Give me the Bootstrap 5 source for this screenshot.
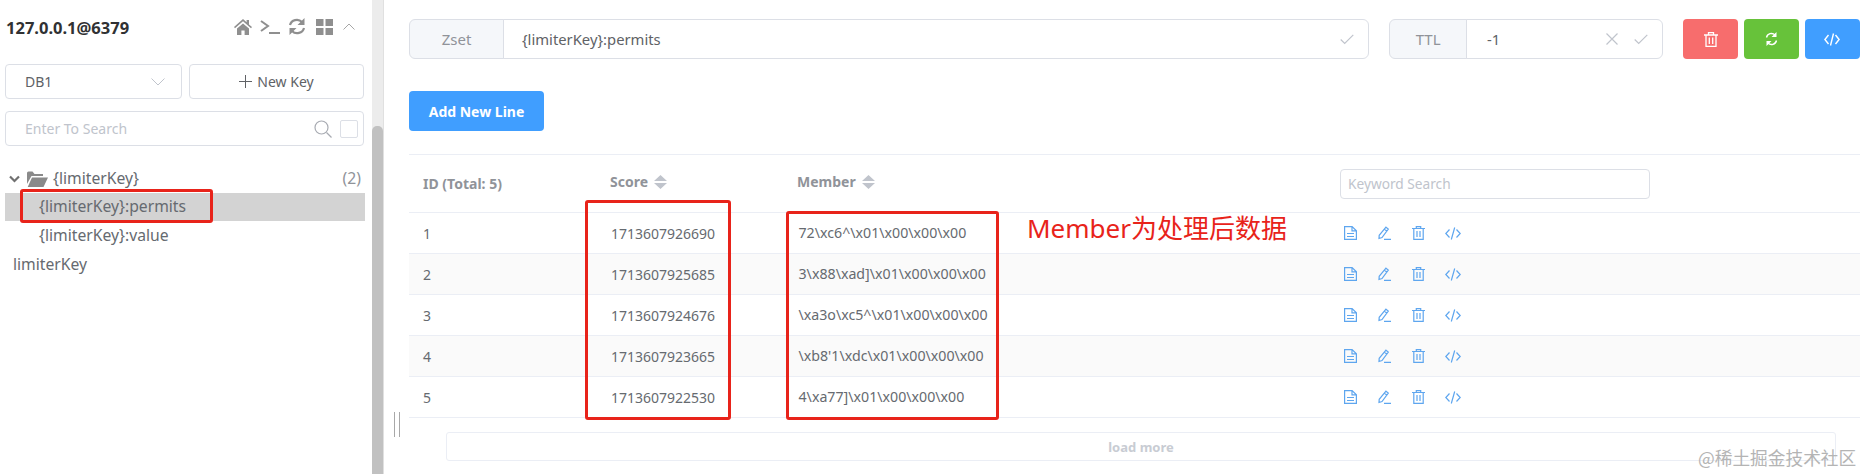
<!doctype html>
<html lang="en"><head><meta charset="utf-8"><title>Redis key</title>
<link href="https://cdn.jsdelivr.net/npm/bootstrap@5.3.0/dist/css/bootstrap.min.css" rel="stylesheet">
<style>
html,body{height:474px;overflow:hidden;background:#fff}
body{font-family:"Noto Sans","Noto Sans CJK SC",sans-serif;font-size:14px;color:#606266}
.rk-root{position:relative;height:474px;width:1864px}
.rk-side{width:372px;height:474px;flex:none}
.rk-track{width:12px;height:474px;flex:none;background:#ececec;border-right:1px solid #e0e0e0}
.rk-thumb{margin-top:126px;height:348px;width:11px;background:#c1c1c1;border-radius:5px 5px 0 0}
.rk-main{flex:1 1 auto;min-width:0;padding:19px 4px 0 25px}
.rk-host{font-weight:700;font-size:16.5px;color:#303133;line-height:20px;padding:18px 0 0 6px;height:64px}
.rk-hicons{position:absolute;left:234px;top:18px}
.rk-ctl{height:35px;border:1px solid #dcdfe6;border-radius:4px;background:#fff;color:#606266;font-size:14px}
.rk-tree{font-size:15.7px;line-height:27.600px;color:#666a70}
.rk-next{line-height:28px;padding-top:.5px}
.rk-sel{background:#d3d3d3}
.rk-ph{color:#c0c4cc}
.rk-g{height:40px;font-size:14px;flex-wrap:nowrap}
.rk-g .input-group-text{background:#f5f7fa;color:#909399;border-color:#dcdfe6;justify-content:center;font-size:15px;padding:0}
.rk-g .form-control{border-color:#dcdfe6;color:#606266;font-size:14.800px;padding:0 14px 0 18px;display:flex;align-items:center}
.rk-btn{width:55.300px;height:40px;padding:0;border:0;border-radius:4px;display:flex;align-items:center;justify-content:center}
.rk-red{background:#f76d6d}.rk-green{background:#67c23a}.rk-blue{background:#409eff}
.rk-add{width:135px;height:40px;margin-top:32px;padding:0;background:#409eff;border:0;border-radius:4px;color:#fff;font-weight:700;font-size:14px}
.rk-tbl{table-layout:fixed;width:100%;margin:23px 0 0;color:#606266;border-top:1px solid #ebeef5;border-bottom:1px solid #ebeef5}
.rk-tbl th,.rk-tbl td{padding:0 14px;border-bottom:1px solid #ebeef5;font-size:14px;vertical-align:middle;background:transparent}
.rk-tbl th{height:58px;color:#909399;font-weight:700;font-size:14px}
.rk-tbl td{height:41px;color:#666a70}
.rk-tbl td.rk-mem{padding-left:15.500px;font-size:14.200px}
.rk-tbl tr.rk-st td{background:#fafafa}
.rk-lift{position:relative;top:-2px;display:inline-flex;align-items:center;gap:6px}
.rk-kw{height:30px;width:310px;border:1px solid #dcdfe6;border-radius:4px;color:#c0c4cc;font-size:13.700px;padding:0 7px;line-height:28px;font-weight:400}
.rk-ops{display:flex;align-items:center;gap:21px;padding-left:3.500px}
.rk-more{margin:14px 24px 0 37px;height:29px;border:1px solid #ebeef5;border-radius:3px;text-align:center;line-height:28px;font-size:13px;font-weight:700;color:#c8ccd3}
.rk-box{position:absolute;border:3px solid #e8231a;border-radius:3px;pointer-events:none}
.rk-b1{left:20px;top:189px;width:193px;height:34px}
.rk-b2{left:585px;top:200px;width:146px;height:220px}
.rk-b3{left:786px;top:211px;width:213px;height:209px}
.rk-note{position:absolute;left:1027px;top:210px;color:#e8231a;font-size:26px;line-height:36px;font-family:"Noto Sans","Noto Sans CJK SC",sans-serif}
.rk-wm{position:absolute;left:1698px;top:445px;font-size:17.700px;line-height:24px;color:#b4b4b4;font-family:"Noto Sans CJK SC",sans-serif;white-space:nowrap}
.rk-split{position:absolute;left:394px;top:412px;width:6px;height:25px;border-left:1px solid #a8a8a8;border-right:1px solid #a8a8a8}
.rk-hicons svg,.rk-ops svg,.rk-btn svg,.rk-g svg,.rk-ctl svg,.rk-tree svg{display:block;flex:none}
</style></head>
<body>
<div class="rk-root d-flex">
  <aside class="rk-side">
    <div class="rk-host">127.0.0.1@6379</div>
    <div class="rk-hicons d-flex align-items-center">
      <svg width="18" height="16" viewBox="0 0 18 16" fill="#8f8f8f"><path d="M9 0 0 8l1 1.200L9 2.300l8 6.900L18 8l-3-2.600V1h-2.400v2.300zM3 9.600V16h4.400v-4.400h3.200V16H15V9.600L9 4.400z"/></svg>
      <svg class="ms-2" width="20" height="14" viewBox="0 0 20 14" fill="none" stroke="#8f8f8f" stroke-width="2"><path d="M1 1l7 5-7 5M9 13h11"/></svg>
      <svg class="ms-2" width="18" height="17" viewBox="0 0 18 17" fill="none" stroke="#8f8f8f" stroke-width="2.200"><path d="M2 7a7 6.600 0 0 1 12-3"/><path d="M16 10a7 6.600 0 0 1-12 3"/><path fill="#8f8f8f" stroke="none" d="M16.500 0v7h-7zM1.500 17v-7h7z"/></svg>
      <svg style="margin-left:10px" width="17" height="16" viewBox="0 0 17 16" fill="#8f8f8f"><path d="M0 0h7.500v7H0zM9.500 0H17v7H9.500zM0 9h7.500v7H0zM9.500 9H17v7H9.500z"/></svg>
      <svg style="margin-left:10px" width="12" height="7" viewBox="0 0 12 7" fill="none" stroke="#a6a6a6"><path d="M.5 6.500 6 1l5.500 5.500"/></svg>
    </div>
    <div class="d-flex" style="gap:7px;padding-left:5px;width:364px">
      <div class="rk-ctl d-flex align-items-center justify-content-between flex-fill" style="padding:0 16px 0 19px"><span>DB1</span><svg width="14" height="8" viewBox="0 0 14 8" fill="none" stroke="#c0c4cc"><path d="M.5.5 7 7 13.500.5"/></svg></div>
      <div class="rk-ctl d-flex align-items-center justify-content-center flex-fill" style="gap:5px"><svg width="13" height="13" viewBox="0 0 13 13" stroke="#606266"><path d="M6.500 0v13M0 6.500h13"/></svg><span>New Key</span></div>
    </div>
    <div class="rk-ctl d-flex align-items-center" style="margin:12px 0 0 5px;width:359px;padding:0 5px 0 19px">
      <span class="rk-ph flex-grow-1">Enter To Search</span>
      <svg width="18" height="18" viewBox="0 0 18 18" fill="none" stroke="#a8abb2" stroke-width="1.200"><circle cx="7.500" cy="7.500" r="6.500"/><path d="m12.500 12.500 5 5"/></svg>
      <span class="ms-2" style="width:18px;height:18px;border:1px solid #dcdfe6;border-radius:2px"></span>
    </div>
    <div class="rk-tree" style="margin:19px 7px 0 5px">
      <div class="d-flex align-items-center" style="height:28px">
        <svg class="ms-1" width="11" height="8" viewBox="0 0 11 8" fill="none" stroke="#707070" stroke-width="2.200"><path d="m1 1.500 4.500 4.500L10 1.500"/></svg>
        <svg style="margin-left:7px" width="21" height="16" viewBox="0 0 21 16" fill="#8a8a8a"><path d="M0 2a1.500 1.500 0 0 1 1.500-1.500h4L7.500 3H16v2H4.500L0 13zM5 6.500h16L16.500 16H.7z"/></svg>
        <span class="flex-grow-1" style="margin-left:5px">{limiterKey}</span><span style="margin-right:4px;color:#909399">(2)</span>
      </div>
      <div class="rk-sel" style="padding-left:34px">{limiterKey}:permits</div>
      <div class="rk-next" style="padding-left:34px">{limiterKey}:value</div>
      <div class="rk-next" style="padding-left:8px">limiterKey</div>
    </div>
  </aside>
  <div class="rk-track"><div class="rk-thumb"></div></div>
  <main class="rk-main">
    <div class="d-flex" style="gap:20px">
      <div class="input-group rk-g flex-grow-1" style="width:auto;flex-basis:0">
        <span class="input-group-text" style="width:95px">Zset</span>
        <div class="form-control"><span class="flex-grow-1">{limiterKey}:permits</span><svg width="14" height="11" viewBox="0 0 14 11" fill="none" stroke="#c0c4cc" stroke-width="1.200"><path d="m.7 5.500 4 4L13.300.8"/></svg></div>
      </div>
      <div class="input-group rk-g" style="width:274px;flex:none">
        <span class="input-group-text" style="width:78px">TTL</span>
        <div class="form-control" style="padding-left:20px"><span class="flex-grow-1">-1</span><svg width="12" height="12" viewBox="0 0 12 12" stroke="#c0c4cc" stroke-width="1.200"><path d="m.5.500 11 11M11.500.500l-11 11"/></svg><svg class="ms-3" width="14" height="11" viewBox="0 0 14 11" fill="none" stroke="#c0c4cc" stroke-width="1.200"><path d="m.7 5.500 4 4L13.300.8"/></svg></div>
      </div>
      <div class="d-flex" style="gap:5.500px">
        <button class="rk-btn rk-red" type="button" aria-label="Delete"><svg width="14" height="15" viewBox="0 0 14 15" fill="none" stroke="#fff" stroke-width="1.300"><path d="M0 3h14M4.500 3V.7h5V3M2 3v11.300h10V3M5.300 5.500v6.500M8.700 5.500v6.500"/></svg></button>
        <button class="rk-btn rk-green" type="button" aria-label="Refresh"><svg width="13" height="14" viewBox="0 0 13 14" fill="none" stroke="#fff" stroke-width="1.400"><path d="M1.500 5.500A5 5 0 0 1 10 3M11.500 8.500A5 5 0 0 1 3 11"/><path fill="#fff" stroke="none" d="M11.500 0v5h-5zM1.500 14V9h5z"/></svg></button>
        <button class="rk-btn rk-blue" type="button" aria-label="Dump"><svg width="16" height="13" viewBox="0 0 16 13" fill="none" stroke="#fff" stroke-width="1.400"><path d="M4.500 2 .9 6.500 4.500 11M11.500 2l3.600 4.500L11.500 11M9.500 .5l-3 12"/></svg></button>
      </div>
    </div>
    <button class="rk-add d-block" type="button">Add New Line</button>
    <table class="table rk-tbl">
      <colgroup><col style="width:187px"><col style="width:187px"><col style="width:543px"><col></colgroup>
      <thead><tr>
        <th>ID (Total: 5)</th>
        <th><span class="rk-lift">Score <svg width="13" height="14" viewBox="0 0 13 14" fill="#c0c4cc"><path d="M6.500 0 13 6H0zM0 8h13l-6.500 6z"/></svg></span></th>
        <th><span class="rk-lift">Member <svg width="13" height="14" viewBox="0 0 13 14" fill="#c0c4cc"><path d="M6.500 0 13 6H0zM0 8h13l-6.500 6z"/></svg></span></th>
        <th><div class="rk-kw">Keyword Search</div></th>
      </tr></thead>
      <tbody id="rk-rows"></tbody>
    </table>
    <div class="rk-more">load more</div>
  </main>
  <div class="rk-box rk-b1"></div>
  <div class="rk-box rk-b2"></div>
  <div class="rk-box rk-b3"></div>
  <div class="rk-note">Member为处理后数据</div>
  <div class="rk-split"></div>
  <div class="rk-wm">@稀土掘金技术社区</div>
</div>
<template id="rk-op"><div class="rk-ops">
  <svg width="13" height="14" viewBox="0 0 13 14" fill="none" stroke="#5ea6ef" stroke-width="1.200"><path d="M.6.600h7.500l4.300 4.200v8.600H.6zM8 .6v4.300h4.400M3 7.500h7M3 10.500h7"/></svg>
  <svg width="13" height="14" viewBox="0 0 13 14" fill="none" stroke="#5ea6ef" stroke-width="1.200"><path d="M8 1.200 10.300 3 4 11.500l-3 1 .2-3.200zM6.500 3.200l2.300 1.800M6 13.400h7"/></svg>
  <svg width="13" height="14" viewBox="0 0 13 14" fill="none" stroke="#5ea6ef" stroke-width="1.200"><path d="M0 2.500h13M4.300 2.500V.6h4.400v1.900M1.800 2.500v10.900h9.400V2.500M5 5v6M8 5v6"/></svg>
  <svg width="16" height="13" viewBox="0 0 16 13" fill="none" stroke="#5ea6ef" stroke-width="1.200" style="margin-left:-1px"><path d="M4.500 2.500.8 6.500l3.700 4M11.500 2.500l3.700 4-3.700 4M9.700.5l-3.400 12"/></svg>
</div></template>
<script src="https://cdn.jsdelivr.net/npm/bootstrap@5.3.0/dist/js/bootstrap.bundle.min.js"></script>
<script>
var d=[["1713607926690","72\\xc6^\\x01\\x00\\x00\\x00"],["1713607925685","3\\x88\\xad]\\x01\\x00\\x00\\x00"],["1713607924676","\\xa3o\\xc5^\\x01\\x00\\x00\\x00"],["1713607923665","\\xb8'1\\xdc\\x01\\x00\\x00\\x00"],["1713607922530","4\\xa77]\\x01\\x00\\x00\\x00"]];
var b=document.getElementById('rk-rows'),t=document.getElementById('rk-op');
d.forEach(function(r,i){var tr=document.createElement('tr');if(i%2)tr.className='rk-st';
[String(i+1),r[0],r[1]].forEach(function(v,j){var td=document.createElement('td');td.textContent=v;if(j==1)td.style.paddingLeft='15px';if(j==2)td.className='rk-mem';tr.appendChild(td)});
var td=document.createElement('td');td.appendChild(t.content.cloneNode(true));tr.appendChild(td);b.appendChild(tr)});
</script>
</body></html>
